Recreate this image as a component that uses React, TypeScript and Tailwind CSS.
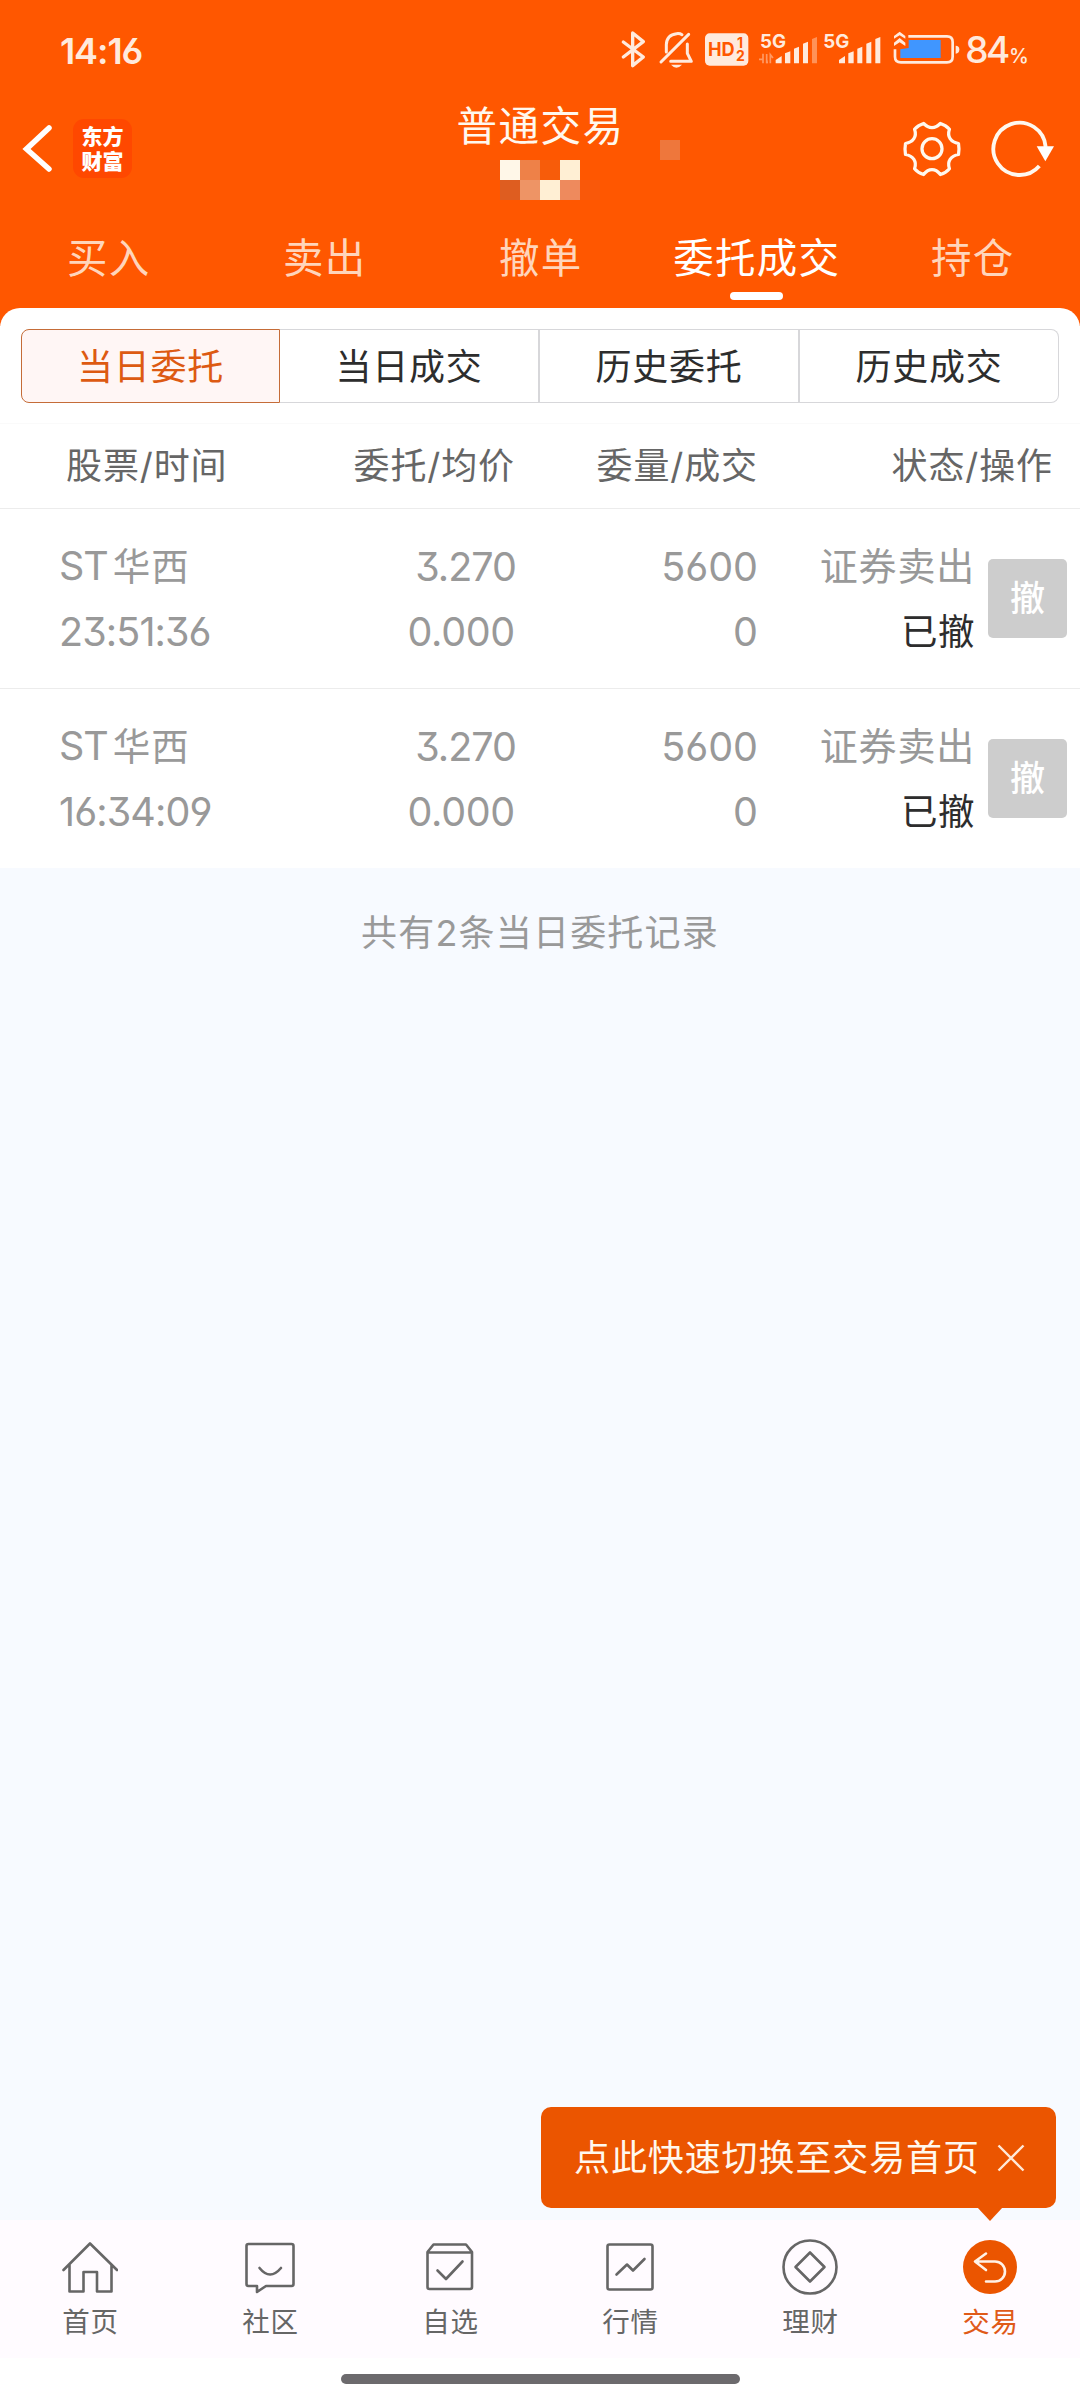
import React from "react";

const ORANGE = "#ff5700";
const CREAM = "#ffeadd";

function StatusBar() {
  return (
    <div className="flex h-[100px] items-center pl-[60px] text-[#ffeadd]">
      <span className="w-[560px] pt-[2px] text-[36px] font-semibold leading-none tracking-[-1.100px]">14:16</span>
      <svg width="30" height="60" viewBox="60 0 90 180" fill="none" stroke={CREAM} strokeWidth="10" strokeLinejoin="round" strokeLinecap="round">
        <path d="M70 66 L130 111 L98 137 V39 L130 65 L70 111" />
      </svg>
      <svg width="50" height="60" viewBox="150 0 150 180" fill="none" stroke={CREAM} strokeWidth="9" strokeLinejoin="round" strokeLinecap="round">
        <path d="M183 126 L266 43" />
        <path d="M199 96 V74 Q200 44 230 41 Q240 40 246 44" />
        <path d="M262 72 V100 L274 124 H212" />
        <path d="M213 134 Q229 152 246 134 Z" fill={CREAM} stroke="none" />
      </svg>
      <svg width="53.33" height="60" viewBox="300 0 160 180">
        <rect x="315" y="40" width="130" height="97" rx="14" fill={CREAM} />
        <g fill={ORANGE} fontFamily="Inter" fontWeight="700">
          <text x="324" y="108" fontSize="57" textLength="80" lengthAdjust="spacingAndGlyphs">HD</text>
          <text x="411" y="84" fontSize="42">1</text>
          <text x="408" y="124" fontSize="42">2</text>
        </g>
      </svg>
      <svg width="66.67" height="60" viewBox="460 0 200 180" fill={CREAM}>
        <text x="481" y="84" fontSize="57" fontFamily="Inter" fontWeight="700" textLength="78" lengthAdjust="spacingAndGlyphs">5G</text>
        <path d="M478 118 H490 V101 M490 130 V116 M501 130 V102 M501 118 L503 130 M512 130 V104 L520 114" fill="none" stroke={CREAM} strokeOpacity=".45" strokeWidth="5" />
        <path d="M528 130 V120 L546 108 V130Z M556 130 V100 L572 94 V130Z M583 130 V86 L598 80 V130Z M610 130 V71 L625 65 V130Z" />
        <path d="M637 130 V57 L652 51 V130Z" opacity=".4" />
      </svg>
      <svg width="66.67" height="60" viewBox="660 0 200 180" fill={CREAM}>
        <text x="670" y="84" fontSize="57" fontFamily="Inter" fontWeight="700" textLength="78" lengthAdjust="spacingAndGlyphs">5G</text>
        <path d="M717 130 V120 L735 108 V130Z M745 130 V100 L761 94 V130Z M772 130 V86 L787 80 V130Z M799 130 V71 L814 65 V130Z M826 130 V57 L841 51 V130Z" />
      </svg>
      <svg width="76.67" height="60" viewBox="860 0 230 180" fill="none">
        <path d="M900 88 L925 84 V60 H1021 V114 H900Z" fill="#4096ff" />
        <path d="M924 49 H1040 Q1057 49 1057 66 V110 Q1057 127 1040 127 H902 Q884 127 884 110 V88" stroke={CREAM} strokeWidth="8" />
        <path d="M881 56 V48 L898 35 L915 48 V56 L898 46Z M881 78 V68 L898 54 L915 68 V78 L898 67Z" fill={CREAM} />
        <path d="M1066 77 Q1077 77 1077 88 Q1077 101 1066 101Z" fill={CREAM} />
      </svg>
      <span className="ml-[2px] flex items-baseline pb-px leading-none">
        <span className="text-[37px] font-medium tracking-[-2.500px]">84</span>
        <span className="ml-px text-[20px] font-medium">%</span>
      </span>
    </div>
  );
}

const mosaic = [
  "bg-[#f95706]", "bg-[#fff7e8]", "bg-[#ee8148]", "bg-[#f75c0a]", "bg-[#ffefd4]", "bg-transparent",
  "bg-transparent", "bg-[#de5d20]", "bg-[#ee9465]", "bg-[#ffefd4]", "bg-[#ee8a5d]", "bg-[#f9580a]",
];

function Header() {
  return (
    <div className="relative flex h-[116px] items-start justify-between">
      <div className="flex pt-[19px]">
        <svg width="60" height="60" viewBox="0 0 60 60" fill="none" stroke="#fff" strokeWidth="5.500" strokeLinecap="round">
          <path d="M49 9 L26.500 30 L49 50" />
        </svg>
        <div className="ml-[13px] flex size-[59px] flex-col items-center justify-center rounded-[11px] bg-[#ff4800] text-[21px] font-black leading-[25px] text-white">
          <span>东方</span>
          <span>财富</span>
        </div>
      </div>
      <div className="absolute left-[480px] top-0 flex w-[120px] flex-col items-center">
        <h1 className="h-[60px] whitespace-nowrap pl-px pt-[2px] text-[40.500px] leading-[50px] tracking-[1.5px] text-[#fff8ee]">普通交易</h1>
        <div className="grid grid-cols-6">
          {mosaic.map((c, i) => (
            <i key={i} className={`size-5 ${c}`} />
          ))}
        </div>
      </div>
      <i className="absolute left-[660px] top-[40px] size-5 bg-[#ee773c]" />
      <div className="flex pr-4 pt-[17px]">
        <svg width="64" height="64" viewBox="540 80 192 192" fill="none" stroke="#fff8ee" strokeWidth="10" strokeLinejoin="round">
          <g transform="translate(636 176) scale(.97) translate(-636 -176)">
            <path d="M610 97 Q622 110 636 110 Q650 110 662 97 Q680 103 690 115 Q684 132 692 144 Q700 156 718 159 Q721 176 718 193 Q700 196 692 208 Q684 220 690 237 Q680 249 662 255 Q650 240 636 240 Q622 240 610 255 Q592 249 582 237 Q588 220 580 208 Q572 196 554 193 Q551 176 554 159 Q572 156 580 144 Q588 132 582 115 Q592 103 610 97Z" />
            <circle cx="636" cy="175" r="31" />
          </g>
        </svg>
        <svg className="ml-6" width="76" height="64" viewBox="804 80 228 192" fill="none">
          <path d="M958 227 A78.500 78.500 0 1 1 977 170" stroke="#fff8ee" strokeWidth="11.500" />
          <path d="M950 168 H1002 L976 213Z" fill="#fff" />
        </svg>
      </div>
    </div>
  );
}

function MainTabs() {
  const tabs = ["买入", "卖出", "撤单", "委托成交", "持仓"];
  return (
    <div className="grid h-[92px] grid-cols-5">
      {tabs.map((t, i) => (
        <div key={t} className={`flex flex-col items-center pt-[18px] text-[40.500px] leading-[50px] tracking-[1.300px] ${i === 3 ? "text-white" : "text-[#ffd5bb]"}`}>
          <span className="pl-[1.500px]">{t}</span>
          {i === 3 && <i className="mt-[8px] h-2 w-[53px] rounded-full bg-white" />}
        </div>
      ))}
    </div>
  );
}

function Segments() {
  const seg = "flex items-center justify-center text-[36px] tracking-[0.8px] pt-px";
  return (
    <div className="mx-[21px] grid h-[74px] grid-cols-[259px_260px_260px_1fr]">
      <div className={`${seg} rounded-l-[8px] border border-[#c56c38] bg-[#fff6f5] text-[#dd5a12]`}>当日委托</div>
      <div className={`${seg} border-y border-r-2 border-[#d7d7da] text-[#2d2d2d]`}>当日成交</div>
      <div className={`${seg} border-y border-r-2 border-[#d7d7da] text-[#2d2d2d]`}>历史委托</div>
      <div className={`${seg} rounded-r-[8px] border border-l-0 border-[#d7d7da] text-[#2d2d2d]`}>历史成交</div>
    </div>
  );
}

function Order({ time, last }: { time: string; last?: boolean }) {
  return (
    <div className={`flex pl-[59px] text-[39.500px] leading-[65px] text-[#999] ${last ? "h-[179px]" : "h-[180px] border-b border-[#ececec]"}`}>
      <div className="w-[215px] shrink-0 pt-[25px]">
        <div className="whitespace-nowrap">
          <span className="tracking-[-1px]">ST</span>
          <span className="ml-[5px] text-[37.500px] tracking-[1px]">华西</span>
        </div>
        <div className="pt-px tracking-[-0.900px]">{time}</div>
      </div>
      <div className="w-[241px] shrink-0 pt-[26px] text-right">
        <div className="-mr-px tracking-[-1px]">3.270</div>
        <div className="tracking-[-0.3px]">0.000</div>
      </div>
      <div className="w-[243px] shrink-0 pt-[26px] text-right">
        <div>5600</div>
        <div>0</div>
      </div>
      <div className="w-[217px] shrink-0 pt-[25px] text-right">
        <div className="text-[38px] tracking-[0.8px]">证券卖出</div>
        <div className="pt-px text-[36.500px] tracking-[0.5px] text-[#2d2d2d]">已撤</div>
      </div>
      <div className="ml-[13px] mt-[50px] flex size-[79px] shrink-0 items-center justify-center rounded-[5px] bg-[#cdcdcd] text-[35px] font-medium text-white">撤</div>
    </div>
  );
}

function Tip() {
  return (
    <div className="absolute bottom-[192px] right-[24px] flex h-[101px] w-[515px] items-center rounded-[10px] bg-[#eb5500] pl-[33px] text-[#fff8ee]">
      <span className="whitespace-nowrap pt-px text-[36px] tracking-[0.900px]">点此快速切换至交易首页</span>
      <svg className="absolute right-[31px] top-[37px]" width="28" height="28" viewBox="0 0 28 28" stroke="#ffe9d8" strokeWidth="2.400">
        <path d="M1.500 1.500 L26.500 26.500 M26.500 1.500 L1.500 26.500" />
      </svg>
      <svg className="absolute right-[53px] top-full -mt-px" width="26" height="14" viewBox="0 0 26 14">
        <path d="M0 0 H26 L13 14Z" fill="#eb5500" />
      </svg>
    </div>
  );
}

const icons: React.ReactNode[] = [
  <path d="M1.500 32 L28 5.500 L55 32 M7.500 27 V53.500 H21.500 V34 H35 V53.500 H49.500 V27" />,
  <>
    <path d="M6.500 6 H49.500 Q51.500 6 51.500 8 V46 Q51.500 48 49.500 48 H24 L15 54 V48 H6.500 Q4.500 48 4.500 46 V8 Q4.500 6 6.500 6Z" />
    <path d="M17.500 30 Q28 43 39 30" />
  </>,
  <>
    <path d="M5.500 14 L11.500 6.500 H44 L50 14 V49 Q50 51 48 51 H7.500 Q5.500 51 5.500 49Z M5.500 14.500 H50" />
    <path d="M15.500 32.500 L24 41 L40.500 23.500" />
  </>,
  <>
    <rect x="5.500" y="6.500" width="45" height="45" rx="2" />
    <path d="M14.500 36.500 L25 26.500 L31 32.500 L42.500 21" />
  </>,
  <>
    <circle cx="28" cy="29" r="26.500" />
    <path d="M28 14.500 L42.500 29 L28 43.500 L13.500 29Z" />
  </>,
  <>
    <circle cx="28" cy="29" r="27" fill="#eb5500" stroke="none" />
    <path d="M24 15.500 L13 23.500 L24 32 M13 23.500 H33 A10 10 0 0 1 33 43.500 H24" stroke="#fff2e6" />
  </>,
];

function BottomNav() {
  const labels = ["首页", "社区", "自选", "行情", "理财", "交易"];
  return (
    <nav className="grid h-[138px] grid-cols-6 bg-[#fffbff]">
      {labels.map((l, i) => (
        <div key={l} className={`flex flex-col items-center pt-[18px] text-[27.500px] leading-[40px] tracking-[0.8px] ${i === 5 ? "text-[#e05a18]" : "text-[#666]"}`}>
          <svg width="56" height="58" viewBox="0 0 56 58" fill="none" stroke="#666" strokeWidth="2.600" strokeLinejoin="round" strokeLinecap="round">
            {icons[i]}
          </svg>
          <span className="mt-[6px] pl-px">{l}</span>
        </div>
      ))}
    </nav>
  );
}

export default function App() {
  return (
    <div className="relative flex h-[2400px] w-[1080px] flex-col overflow-hidden bg-[#f7faff] [font-family:Inter,'Noto_Sans_CJK_SC',sans-serif] [font-feature-settings:'cv03','cv04','cv09']">
      <header className="h-[326px] bg-[#ff5700]">
        <StatusBar />
        <Header />
        <MainTabs />
      </header>
      <main className="-mt-[18px] flex-1">
        <section className="rounded-t-[20px] bg-white pt-[21px]">
          <Segments />
          <div className="mt-[20px] flex h-[86px] whitespace-nowrap border-b border-t border-b-[#ececec] border-t-[#fafafa] pl-[66px] text-[36px] leading-[84px] tracking-[0.900px] text-[#666]">
            <span className="w-[209px]">股票/时间</span>
            <span className="w-[240px] text-right">委托/均价</span>
            <span className="w-[243px] text-right">委量/成交</span>
            <span className="w-[295px] text-right">状态/操作</span>
          </div>
          <Order time="23:51:36" />
          <Order time="16:34:09" last />
        </section>
        <p className="pt-[40px] text-center text-[36px] leading-[50px] tracking-[1.200px] text-[#999]">共有2条当日委托记录</p>
      </main>
      <BottomNav />
      <div className="flex h-[42px] justify-center bg-white pt-[16px]">
        <i className="h-[10px] w-[399px] rounded-full bg-[#6c6a6d]" />
      </div>
      <Tip />
    </div>
  );
}
